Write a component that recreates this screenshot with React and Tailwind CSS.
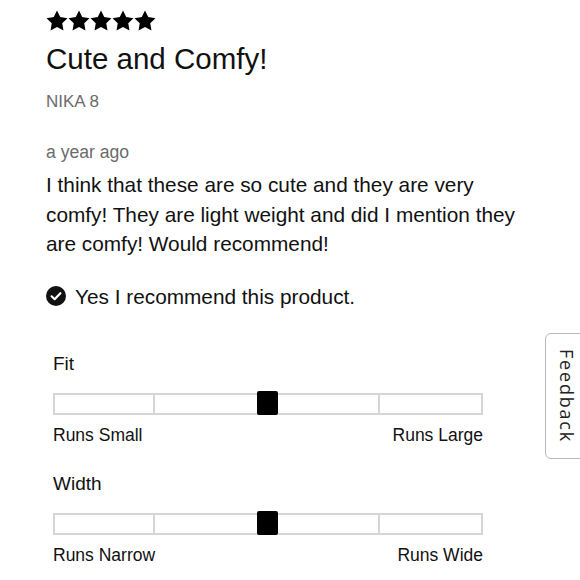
import React from 'react';

const Star = () => (
  <svg width="22" height="21" viewBox="1.5 1.5 21 20" className="block">
    <path d="M12 2l3.09 6.26L22 9.27l-5 4.87 1.18 6.88L12 17.77l-6.18 3.25L7 14.14 2 9.27l6.91-1.01L12 2z" fill="#000" />
  </svg>
);

const CheckCircle = () => (
  <svg width="20" height="20" viewBox="0 0 20 20" className="block shrink-0">
    <circle cx="10" cy="10" r="10" fill="#111" />
    <path d="M5.6 10.3l3 2.9 5.8-6" stroke="#fff" strokeWidth="2.2" fill="none" strokeLinecap="round" strokeLinejoin="round" />
  </svg>
);

// Fit / Width slider, knob sits in the middle
const FitSlider = ({ label, left, right, topGap }) => (
  <div className={`w-[430px] ${topGap}`}>
    <div className="text-[19px] leading-[19px] text-[#111]">{label}</div>
    <div className="relative mt-[20px] w-[430px] h-[22px] border-2 border-[#d6d6d6] bg-white flex">
      <div className="w-[100px] border-r-2 border-[#d6d6d6]" />
      <div className="flex-1 border-r-2 border-[#d6d6d6]" />
      <div className="flex-1 border-r-2 border-[#d6d6d6]" />
      <div className="w-[101px]" />
      <div className="absolute left-[202px] top-[-4px] w-[21px] h-[24px] bg-black rounded-[2px]" />
    </div>
    <div className="mt-[11px] flex justify-between text-[17.5px] leading-[18px] text-[#111]">
      <span>{left}</span>
      <span>{right}</span>
    </div>
  </div>
);

export default function App() {
  return (
    <div className="relative w-[580px] h-[580px] overflow-hidden bg-white font-['Liberation_Sans',Arial,sans-serif]">
      <div className="pl-[46px] pt-[10px]">
        <div className="flex">
          <Star />
          <Star />
          <Star />
          <Star />
          <Star />
        </div>

        <h2 className="mt-[13px] text-[29.5px] leading-[29px] text-[#111]">Cute and Comfy!</h2>
        <div className="mt-[20px] text-[17px] leading-[17px] text-[#6b6b6b]">NIKA 8</div>
        <div className="mt-[33px] text-[17.6px] leading-[18px] text-[#6b6b6b]">a year ago</div>

        <p className="mt-[9px] w-[490px] text-[20.8px] leading-[29.5px] text-[#111]">
          I think that these are so cute and they are very comfy! They are light weight and did I mention they are comfy! Would recommend!
        </p>

        <div className="mt-[27px] flex items-center gap-[9px]">
          <CheckCircle />
          <span className="text-[20.8px] leading-[21px] text-[#111]">Yes I recommend this product.</span>
        </div>

        <div className="pl-[7px]">
          <FitSlider label="Fit" left="Runs Small" right="Runs Large" topGap="mt-[47px]" />
          <FitSlider label="Width" left="Runs Narrow" right="Runs Wide" topGap="mt-[30px]" />
        </div>
      </div>

      <div className="absolute left-[545px] top-[333px] w-[45px] h-[126px] border border-[#b8b8b8] rounded-l-[6px] bg-white flex items-center pl-[7px]">
        <span className="[writing-mode:vertical-rl] font-['Open_Sans',sans-serif] text-[18px] tracking-[1.8px] text-[#222]">Feedback</span>
      </div>
    </div>
  );
}
